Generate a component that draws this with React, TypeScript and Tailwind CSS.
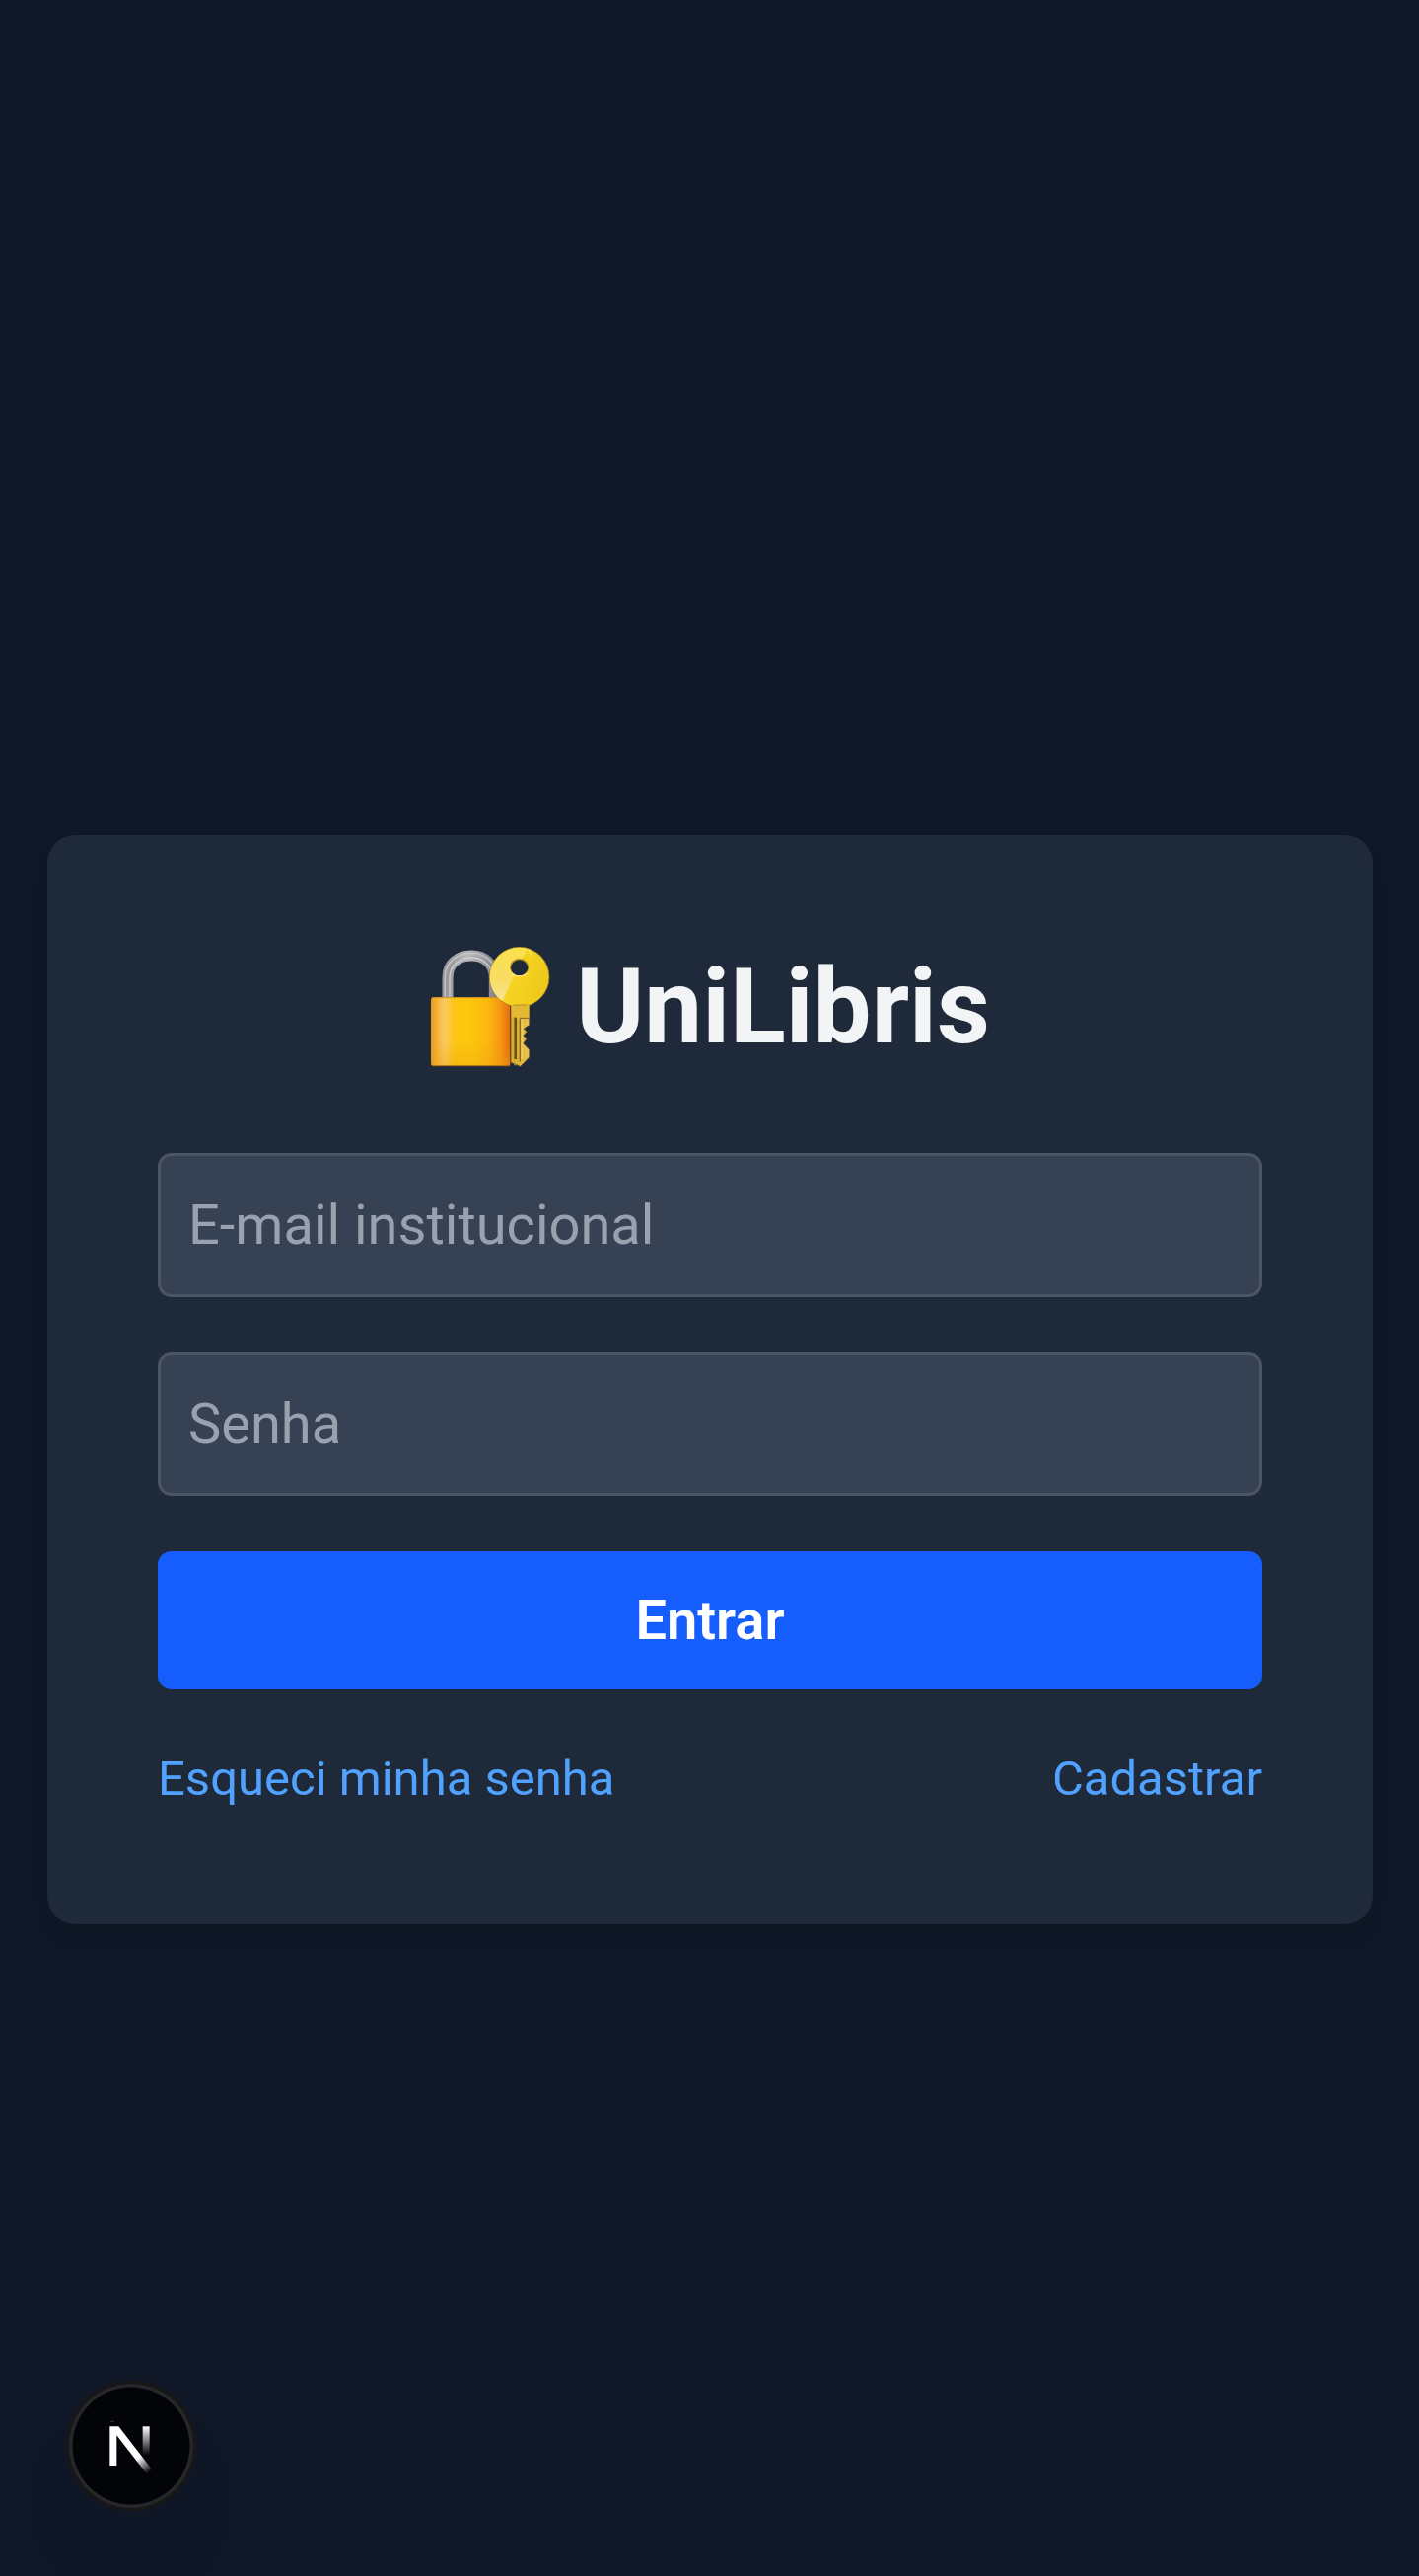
function LockWithKey() {
  return (
    <svg viewBox="48 56 369 375" className="mb-[3px] h-[125px] w-[123px] shrink-0" aria-hidden="true">
      <defs>
        <linearGradient id="body" x1="0" x2="1" y1="0" y2="0">
          <stop offset="0" stopColor="#e59a1c" />
          <stop offset="0.08" stopColor="#f5b23c" />
          <stop offset="0.17" stopColor="#f9cb60" />
          <stop offset="0.3" stopColor="#fbc512" />
          <stop offset="0.48" stopColor="#fcc70c" />
          <stop offset="0.72" stopColor="#fbb80f" />
          <stop offset="0.88" stopColor="#f5960f" />
          <stop offset="1" stopColor="#e56a12" />
        </linearGradient>
        <linearGradient id="lower" x1="0" x2="0" y1="0" y2="1">
          <stop offset="0.65" stopColor="#f0a010" stopOpacity="0" />
          <stop offset="1" stopColor="#eda012" stopOpacity="0.35" />
        </linearGradient>
        <linearGradient id="steel" x1="0" x2="1" y1="0" y2="0">
          <stop offset="0" stopColor="#9a9a9c" />
          <stop offset="0.45" stopColor="#b9b9bb" />
          <stop offset="1" stopColor="#85878a" />
        </linearGradient>
        <linearGradient id="bow" x1="0" x2="1" y1="0" y2="0.3">
          <stop offset="0" stopColor="#f5d84b" />
          <stop offset="0.5" stopColor="#f7d422" />
          <stop offset="1" stopColor="#eec91c" />
        </linearGradient>
        <linearGradient id="shine" x1="0" x2="0" y1="0" y2="1">
          <stop offset="0" stopColor="#fbe04a" />
          <stop offset="0.6" stopColor="#f8dd63" />
          <stop offset="1" stopColor="#f5e39a" />
        </linearGradient>
        <linearGradient id="blade" x1="0" x2="1" y1="0" y2="0">
          <stop offset="0" stopColor="#d9a92b" />
          <stop offset="0.5" stopColor="#e0b63a" />
          <stop offset="1" stopColor="#e8c65c" />
        </linearGradient>
        <clipPath id="bowClip">
          <circle cx="320" cy="154" r="90" />
        </clipPath>
      </defs>
      <path d="M102 218V156C102 112 134 89 174 89C214 89 244 114 244 156V218" fill="none" stroke="url(#steel)" strokeWidth="33" />
      <path d="M94 214V156C94 108 130 82 174 81C214 81 244 106 250 144" fill="none" stroke="#c4c4c6" strokeWidth="4" />
      <path d="M108 214V158C108 120 138 95 174 95C208 95 234 116 238 150" fill="none" stroke="#cdcdcf" strokeWidth="4" />
      <rect x="51" y="215" width="241" height="210" rx="9" fill="url(#body)" />
      <rect x="51" y="215" width="241" height="210" rx="9" fill="url(#lower)" />
      <path d="M58 217H280" stroke="#c98a22" strokeWidth="3" />
      <path d="M56 424H291" stroke="#a96d17" strokeWidth="3" />
      <path d="M303 416L312 423H304Z" fill="#a9a9a9" />
      <path d="M294 235H350V300L341 306L333 312L343 320L332 332L342 342L332 356L350 375V398L323 426L294 414Z" fill="url(#blade)" stroke="#6d571d" strokeWidth="2" />
      <circle cx="320" cy="154" r="91" fill="url(#bow)" stroke="#8e7423" strokeWidth="2" />
      <g clipPath="url(#bowClip)">
        <path d="M346 62L268 226L220 210V60Z" fill="url(#shine)" />
        <path d="M346 66L358 88" stroke="#fbe77c" strokeWidth="4" />
      </g>
      <path d="M296 239H349V276H296Z" fill="#e3b933" />
      <path d="M302 239H344" stroke="#b58c23" strokeWidth="3" />
      <path d="M308 277V404" stroke="#66511b" strokeWidth="8" />
      <path d="M302 277V400M317 280V408" stroke="#d7a93a" strokeWidth="3" />
      <path d="M322 280V412" stroke="#8b6b20" strokeWidth="4" />
      <path d="M322 279H349" stroke="#806321" strokeWidth="3" />
      <path d="M328 284V404" stroke="#ecd06a" strokeWidth="4" />
      <ellipse cx="320" cy="124" rx="29" ry="27" fill="#bc9a1d" />
      <ellipse cx="320" cy="126" rx="26" ry="24" fill="#1e2939" />
      <path d="M296 143Q320 161 345 142" fill="none" stroke="#fbe98a" strokeWidth="4" />
    </svg>
  );
}

function NextBadge() {
  return (
    <button
      aria-label="Next.js"
      className="fixed bottom-[69px] left-[70px] size-[126px] rounded-full bg-[#030408] shadow-[0_0_0_3.5px_#171717,inset_0_0_0_3.5px_rgba(255,255,255,0.14),0_56px_112px_-28px_rgba(0,0,0,0.1)]"
    >
      <svg viewBox="0 0 378 378" className="size-full" fill="none" aria-hidden="true">
        <defs>
          <linearGradient id="diagonal" x1="208" y1="218" x2="246" y2="268" gradientUnits="userSpaceOnUse">
            <stop stopColor="white" />
            <stop offset="0.12" stopColor="white" />
            <stop offset="1" stopColor="white" stopOpacity="0" />
          </linearGradient>
          <linearGradient id="stem" x1="234" y1="130" x2="234" y2="217" gradientUnits="userSpaceOnUse">
            <stop stopColor="white" />
            <stop offset="1" stopColor="white" stopOpacity="0" />
          </linearGradient>
        </defs>
        <path d="M126 115H138" stroke="#555" strokeWidth="2" />
        <path d="M224 130H245V217H224Z" fill="url(#stem)" />
        <path d="M124 130H151L257 267L240 279L145 157V249H124Z" fill="url(#diagonal)" />
      </svg>
    </button>
  );
}

const fieldClass =
  "block h-[146px] w-full rounded-[14px] border-[3px] border-[#4a5565] bg-[#364153] px-[28px] text-[56px] leading-[84px] text-gray-100 outline-none placeholder:text-[#99a1af]";

export default function App() {
  return (
    <main className="flex h-[2612px] w-full items-center justify-center overflow-hidden bg-[#101828] pt-[186px] pl-px font-[Roboto,sans-serif]">
      <section className="w-[1344px] rounded-[28px] bg-[#1e2939] p-[112px] shadow-[0_14px_21px_-3.5px_rgba(0,0,0,0.1),0_7px_14px_-7px_rgba(0,0,0,0.1)]">
        <h1 className="mb-[84px] flex h-[126px] items-center justify-center gap-[25px] text-[105px] leading-[126px] font-bold text-[#f3f4f6]">
          <LockWithKey />
          <span>UniLibris</span>
        </h1>
        <form className="flex flex-col gap-[56px]" onSubmit={(event) => event.preventDefault()}>
          <input className={fieldClass} type="email" placeholder="E-mail institucional" />
          <input className={fieldClass} type="password" placeholder="Senha" />
          <button className="h-[140px] w-full rounded-[14px] bg-[#155dfc] text-[56px] leading-[84px] font-semibold text-white">
            Entrar
          </button>
        </form>
        <div className="mt-[56px] flex justify-between text-[49px] leading-[70px] text-[#51a2ff]">
          <a href="#">Esqueci minha senha</a>
          <a href="#">Cadastrar</a>
        </div>
      </section>
      <NextBadge />
    </main>
  );
}
